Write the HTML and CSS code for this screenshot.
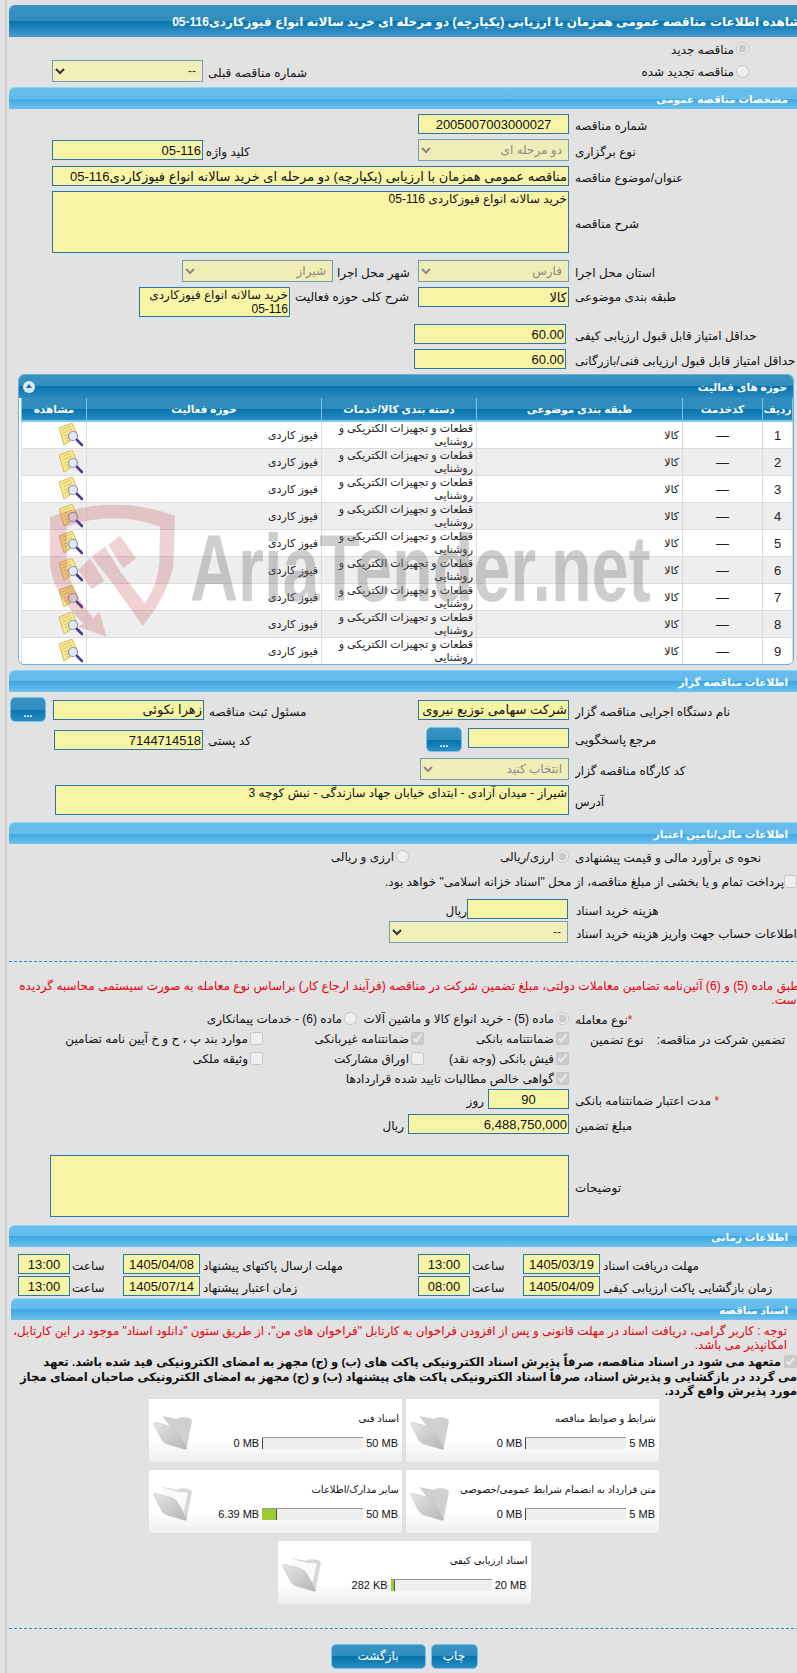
FILE: index.html
```
<!DOCTYPE html>
<html lang="fa">
<head>
<meta charset="utf-8">
<title>مشاهده اطلاعات مناقصه</title>
<link rel="stylesheet" href="styles.css">
</head>
<body>
<svg class="defs" width="0" height="0" aria-hidden="true">
  <defs>
    <linearGradient id="fg" x1="0" y1="0" x2="1" y2="1"><stop offset="0" stop-color="#e6e6e6"/><stop offset="1" stop-color="#b5b5b5"/></linearGradient>
    <symbol id="note" viewBox="0 0 24 24">
      <polygon points="0,5 13,0 19,13 5,22" fill="#f8e88e" stroke="#c9a94e" stroke-width=".8"/>
      <path d="M3 7l9-4M4 10l9-4M5 13l5-2M6 16l4-2M8 18l4-2" stroke="#d4b860" stroke-width=".8"/>
      <circle cx="14" cy="13" r="4.5" fill="#dfeaf6" stroke="#8f95b8" stroke-width="1.2"/>
      <path d="M18 17l5 5" stroke="#4a3a92" stroke-width="2.6" stroke-linecap="round"/>
    </symbol>
    <symbol id="folderFull" viewBox="0 0 42 38">
      <path d="M10 2L25 5Q33 2 40 5Q42 6 41 10L36 36L24 20Z" fill="#d0d0d0"/>
      <path d="M1 10Q1 8 4 9L19 13Q25 15 27 20L36 36Q36 38 33 37L16 32Q12 31 10 28Z" fill="url(#fg)" stroke="#c4c4c4" stroke-width=".6"/>
    </symbol>
    <symbol id="folderOpen" viewBox="0 0 42 38">
      <path d="M10 2L25 5Q33 2 40 5Q42 6 41 10L36 36L24 20Z" fill="#d8d8d8"/>
      <path d="M11 3L26 7L37 8L33 28L25 16L12 11Z" fill="#fafafa"/>
      <path d="M1 10Q1 8 4 9L19 13Q25 15 27 20L36 36Q36 38 33 37L16 32Q12 31 10 28Z" fill="url(#fg)" stroke="#c4c4c4" stroke-width=".6"/>
    </symbol>
  </defs>
</svg>
<div class="page" dir="rtl">
  <h1 class="bar dark title">مشاهده اطلاعات مناقصه عمومی همزمان با ارزیابی (یکپارچه) دو مرحله ای خرید سالانه انواع فیوزکاردی116-05</h1>

  <div class="row h23"><label class="radio r60"><input type="radio" disabled checked><span>مناقصه جدید</span></label></div>
  <div class="row h22">
    <label class="radio r60"><input type="radio" disabled><span>مناقصه تجدید شده</span></label>
    <div class="group"><span class="lab l101">شماره مناقصه قبلی</span><select class="sel w151"><option>--</option></select></div>
  </div>

  <h2 class="bar light mt5">مشخصات مناقصه عمومی</h2>
  <div class="row h20 mt5"><span class="lab main">شماره مناقصه</span><input class="inp w151 center" value="2005007003000027"></div>
  <div class="row h22 mt5">
    <span class="lab main">نوع برگزاری</span><select class="sel w151" disabled><option>دو مرحله ای</option></select>
    <div class="group"><span class="lab l43">کلید واژه</span><input class="inp w151" value="05-116"></div>
  </div>
  <div class="row h20 mt5"><span class="lab main">عنوان/موضوع مناقصه</span><input class="inp w517" value="مناقصه عمومی همزمان با ارزیابی (یکپارچه) دو مرحله ای خرید سالانه انواع فیوزکاردی116-05"></div>
  <div class="row h62 mt5"><span class="lab main">شرح مناقصه</span><textarea class="inp w517 area">خرید سالانه انواع فیوزکاردی 116-05</textarea></div>
  <div class="row h22 mt7">
    <span class="lab main">استان محل اجرا</span><select class="sel w151" disabled><option>فارس</option></select>
    <span class="lab l82">شهر محل اجرا</span><select class="sel w151" disabled><option>شیراز</option></select>
  </div>
  <div class="row h30 mt5 top">
    <span class="lab main">طبقه بندی موضوعی</span><input class="inp w151 h20" value="کالا">
    <span class="lab l123">شرح کلی حوزه فعالیت</span><textarea class="inp w151 h30">خرید سالانه انواع فیوزکاردی 116-05</textarea>
  </div>
  <div class="row h20 mt7"><span class="lab main wide">حداقل امتیاز قابل قبول ارزیابی کیفی</span><input class="inp w152" value="60.00"></div>
  <div class="row h20 mt5"><span class="lab main wide">حداقل امتیاز قابل قبول ارزیابی فنی/بازرگانی</span><input class="inp w152" value="60.00"></div>

  <section class="panel mt5">
    <div class="panel-head">
      <span class="panel-title">حوزه های فعالیت</span>
      <span class="collapse"></span>
    </div>
    <table class="grid">
      <colgroup><col class="c1"><col class="c2"><col class="c3"><col class="c4"><col class="c5"><col class="c6"></colgroup>
      <thead><tr><th>ردیف</th><th>کدخدمت</th><th>طبقه بندی موضوعی</th><th>دسته بندی کالا/خدمات</th><th>حوزه فعالیت</th><th>مشاهده</th></tr></thead>
      <tbody>
        <tr><td class="n">1</td><td class="n">—</td><td>کالا</td><td>قطعات و تجهیزات الکتریکی و روشنایی</td><td>فیوز کاردی</td><td class="ic"><svg class="note"><use href="#note"/></svg></td></tr>
        <tr><td class="n">2</td><td class="n">—</td><td>کالا</td><td>قطعات و تجهیزات الکتریکی و روشنایی</td><td>فیوز کاردی</td><td class="ic"><svg class="note"><use href="#note"/></svg></td></tr>
        <tr><td class="n">3</td><td class="n">—</td><td>کالا</td><td>قطعات و تجهیزات الکتریکی و روشنایی</td><td>فیوز کاردی</td><td class="ic"><svg class="note"><use href="#note"/></svg></td></tr>
        <tr><td class="n">4</td><td class="n">—</td><td>کالا</td><td>قطعات و تجهیزات الکتریکی و روشنایی</td><td>فیوز کاردی</td><td class="ic"><svg class="note"><use href="#note"/></svg></td></tr>
        <tr><td class="n">5</td><td class="n">—</td><td>کالا</td><td>قطعات و تجهیزات الکتریکی و روشنایی</td><td>فیوز کاردی</td><td class="ic"><svg class="note"><use href="#note"/></svg></td></tr>
        <tr><td class="n">6</td><td class="n">—</td><td>کالا</td><td>قطعات و تجهیزات الکتریکی و روشنایی</td><td>فیوز کاردی</td><td class="ic"><svg class="note"><use href="#note"/></svg></td></tr>
        <tr><td class="n">7</td><td class="n">—</td><td>کالا</td><td>قطعات و تجهیزات الکتریکی و روشنایی</td><td>فیوز کاردی</td><td class="ic"><svg class="note"><use href="#note"/></svg></td></tr>
        <tr><td class="n">8</td><td class="n">—</td><td>کالا</td><td>قطعات و تجهیزات الکتریکی و روشنایی</td><td>فیوز کاردی</td><td class="ic"><svg class="note"><use href="#note"/></svg></td></tr>
        <tr><td class="n">9</td><td class="n">—</td><td>کالا</td><td>قطعات و تجهیزات الکتریکی و روشنایی</td><td>فیوز کاردی</td><td class="ic"><svg class="note"><use href="#note"/></svg></td></tr>
      </tbody>
    </table>
  </section>

  <h2 class="bar light mt5">اطلاعات مناقصه گزار</h2>
  <div class="row h25 mt5">
    <span class="lab main">نام دستگاه اجرایی مناقصه گزار</span><input class="inp w151" value="شرکت سهامی توزیع نیروی برق استان فارس">
    <div class="group g2"><span class="lab l101">مسئول ثبت مناقصه</span><input class="inp w151" value="زهرا نکوئی"><button class="more" type="button">...</button></div>
  </div>
  <div class="row h26 mt5 top">
    <span class="lab main pt3">مرجع پاسخگویی</span><input class="inp w101 h20 mt1" value=""><button class="more ms6" type="button">...</button>
    <div class="group gpost"><span class="lab l101 pt4">کد پستی</span><input class="inp w149 h20 mt3" value="7144714518"></div>
  </div>
  <div class="row h22 mt5"><span class="lab main">کد کارگاه مناقصه گزار</span><select class="sel w149" disabled><option>انتخاب کنید</option></select></div>
  <div class="row h30 mt5"><span class="lab main">آدرس</span><textarea class="inp w514 h30">شیراز - میدان آزادی - ابتدای خیابان جهاد سازندگی - نبش کوچه 3</textarea></div>

  <h2 class="bar light mt7">اطلاعات مالی/تامین اعتبار</h2>
  <div class="row h20 mt2">
    <span class="lab main">نحوه ی برآورد مالی و قیمت پیشنهادی</span>
    <label class="radio col160"><input type="radio" disabled checked><span>ارزی/ریالی</span></label>
    <label class="radio"><input type="radio" disabled><span>ارزی و ریالی</span></label>
  </div>
  <div class="row h20 mt5 check-row">
    <label class="radio tight"><input type="checkbox" disabled><span>پرداخت تمام و یا بخشی از مبلغ مناقصه، از محل "اسناد خزانه اسلامی" خواهد بود.</span></label>
  </div>
  <div class="row h20 mt8"><span class="lab main m233">هزینه خرید اسناد</span><input class="inp w101" value=""><span class="unit">ریال</span></div>
  <div class="row h22 mt2"><span class="lab main m233">اطلاعات حساب جهت واریز هزینه خرید اسناد</span><select class="sel w179"><option>--</option></select></div>

  <hr class="dash mt18">
  <p class="red mt17"><span>طبق ماده (5) و (6) آئین‌نامه تضامین معاملات دولتی، مبلغ تضمین شرکت در مناقصه (فرآیند ارجاع کار) براساس نوع معامله به صورت سیستمی محاسبه گردیده</span><span>است.</span></p>
  <div class="row h20 mt1">
    <span class="lab main"><b class="star">*</b>نوع معامله</span>
    <label class="radio col212"><input type="radio" disabled checked><span>ماده (5) - خرید انواع کالا و ماشین آلات</span></label>
    <label class="radio"><input type="radio" disabled><span>ماده (6) - خدمات پیمانکاری</span></label>
  </div>
  <div class="row h20">
    <div class="lab main split"><span>تضمین شرکت در مناقصه:</span><span>نوع تضمین</span></div>
    <label class="radio col145"><input type="checkbox" disabled checked><span>ضمانتنامه بانکی</span></label>
    <label class="radio col161"><input type="checkbox" disabled checked><span>ضمانتنامه غیربانکی</span></label>
    <label class="radio"><input type="checkbox" disabled><span>موارد بند پ ، ح و خ آیین نامه تضامین</span></label>
  </div>
  <div class="row h20">
    <span class="lab main"></span>
    <label class="radio col145"><input type="checkbox" disabled checked><span>فیش بانکی (وجه نقد)</span></label>
    <label class="radio col161"><input type="checkbox" disabled><span>اوراق مشارکت</span></label>
    <label class="radio"><input type="checkbox" disabled><span>وثیقه ملکی</span></label>
  </div>
  <div class="row h20">
    <span class="lab main"></span>
    <label class="radio"><input type="checkbox" disabled checked><span>گواهی خالص مطالبات تایید شده قراردادها</span></label>
  </div>
  <div class="row h20 mt1"><span class="lab main"><b class="star">*</b> مدت اعتبار ضمانتنامه بانکی</span><input class="inp w81 center" value="90"><span class="unit u4">روز</span></div>
  <div class="row h20 mt5"><span class="lab main">مبلغ تضمین</span><input class="inp w161" value="6,488,750,000"><span class="unit u4">ریال</span></div>
  <div class="row h62 mt21"><span class="lab main">توضیحات</span><textarea class="inp w519 area"></textarea></div>

  <h2 class="bar light mt8">اطلاعات زمانی</h2>
  <div class="row h20 mt7">
    <span class="lab tl1">مهلت دریافت اسناد</span><input class="inp date" value="1405/03/19"><span class="lab saat">ساعت</span><input class="inp time" value="13:00">
    <span class="lab tl2">مهلت ارسال پاکتهای پیشنهاد</span><input class="inp date" value="1405/04/08"><span class="lab saat">ساعت</span><input class="inp time" value="13:00">
  </div>
  <div class="row h20 mt2">
    <span class="lab tl1">زمان بازگشایی پاکت ارزیابی کیفی</span><input class="inp date" value="1405/04/09"><span class="lab saat">ساعت</span><input class="inp time" value="08:00">
    <span class="lab tl2">زمان اعتبار پیشنهاد</span><input class="inp date" value="1405/07/14"><span class="lab saat">ساعت</span><input class="inp time" value="13:00">
  </div>

  <h2 class="bar light mt2 indent">اسناد مناقصه</h2>
  <p class="red mt4 note-red"><span>توجه : کاربر گرامی، دریافت اسناد در مهلت قانونی و پس از افزودن فراخوان به کارتابل "فراخوان های من"، از طریق ستون "دانلود اسناد" موجود در این کارتابل،</span><span>امکانپذیر می باشد.</span></p>
  <div class="pledge mt3">
    <span class="pl1"><input type="checkbox" disabled checked>متعهد می شود در اسناد مناقصه، صرفاً پذیرش اسناد الکترونیکی پاکت های (ب) و (ج) مجهز به امضای الکترونیکی قید شده باشد. تعهد</span>
    <span>می گردد در بازگشایی و پذیرش اسناد، صرفاً اسناد الکترونیکی پاکت های پیشنهاد (ب) و (ج) مجهز به امضای الکترونیکی صاحبان امضای مجاز</span>
    <span>مورد پذیرش واقع گردد.</span>
  </div>

  <div class="cards">
    <article class="card"><div class="info"><div class="cname">شرایط و ضوابط مناقصه</div><div class="prog"><span>5 MB</span><div class="track"><i></i></div><span>0 MB</span></div></div><svg class="folder"><use href="#folderFull"/></svg></article>
    <article class="card"><div class="info"><div class="cname">اسناد فنی</div><div class="prog"><span>50 MB</span><div class="track"><i></i></div><span>0 MB</span></div></div><svg class="folder"><use href="#folderFull"/></svg></article>
    <article class="card"><div class="info"><div class="cname">متن قرارداد به انضمام شرایط عمومی/خصوصی</div><div class="prog"><span>5 MB</span><div class="track"><i></i></div><span>0 MB</span></div></div><svg class="folder"><use href="#folderFull"/></svg></article>
    <article class="card"><div class="info"><div class="cname">سایر مدارک/اطلاعات</div><div class="prog"><span>50 MB</span><div class="track"><i class="fill" style="width:14px"></i></div><span>6.39 MB</span></div></div><svg class="folder"><use href="#folderOpen"/></svg></article>
    <article class="card"><div class="info"><div class="cname">اسناد ارزیابی کیفی</div><div class="prog"><span>20 MB</span><div class="track"><i class="fill" style="width:3px"></i></div><span>282 KB</span></div></div><svg class="folder"><use href="#folderOpen"/></svg></article>
  </div>

  <hr class="dash mt24">
  <div class="actions">
    <button class="btn print" type="button">چاپ</button>
    <button class="btn back" type="button">بازگشت</button>
  </div>
</div>

<div class="wm-text">AriaTender.net</div>
<svg class="wm-logo" viewBox="0 0 450 450" aria-hidden="true">
  <path d="M0 65Q190-5 375 62L370 215Q345 315 278 392L180 255L212 232L285 325Q325 265 328 200L330 95Q190 45 50 95L52 210Q60 290 130 368L148 350L170 425L85 395L100 385Q10 300 0 210Z"/>
  <path d="M175 150L210 122L258 190L220 220Z"/>
  <path d="M125 185L165 155L212 230L180 255Z"/>
  <path d="M85 225L120 190L163 258L125 283Z"/>
</svg>
</body>
</html>
```
FILE: styles.css
```
html { overflow-x: hidden; background: #e2e2e2; }
body {
  margin: 0;
  width: 797px;
  height: 1673px;
  overflow: hidden;
  position: relative;
  background: #e2e2e2;
  color: #111;
  font: 12px/20px "Liberation Sans", "DejaVu Sans", sans-serif;
}
.defs { position: absolute; }
.page {
  margin-left: 5px;
  border-left: 2px solid #cdcdcd;
  padding: 5px 0 0 2px;
  width: 800px;
  height: 1668px;
}
.bar {
  margin: 0;
  height: 22px;
  line-height: 23px;
  color: #fff;
  font-size: 10.5px;
  font-weight: bold;
  padding-right: 21px;
  border-radius: 6px 6px 0 0;
  white-space: nowrap;
  overflow: hidden;
}
.light {
  background: linear-gradient(#68bfec 0, #63bbea 50%, #3ea6e2 50%, #6cc2ee 100%);
  border-top: 1px solid #86d4f6;
  height: 21px;
}
.dark { background: linear-gradient(#3a92c1 0, #2f8ebf 50%, #0673ad 50%, #449bd0 100%); }
.title { height: 32px; line-height: 34px; font-size: 12px; padding-right: 0; }
.indent { width: 777px; }

.row { display: flex; align-items: center; white-space: nowrap; }
.top { align-items: flex-start; }
.h20 { height: 20px; }
.h22 { height: 22px; }
.h23 { height: 23px; }
.h25 { height: 25px; }
.h26 { height: 26px; }
.h30 { height: 30px; }
.h62 { height: 62px; }
.inp.h30 { height: 30px; }
.mt1 { margin-top: 1px; }
.mt2 { margin-top: 2px; }
.mt3 { margin-top: 3px; }
.mt4 { margin-top: 4px; }
.mt5 { margin-top: 5px; }
.mt7 { margin-top: 7px; }
.mt8 { margin-top: 8px; }
.mt17 { margin-top: 17px; }
.mt18 { margin-top: 18px; }
.mt21 { margin-top: 21px; }
.mt24 { margin-top: 24px; }
.inp.mt1 { margin-top: 1px; }
.inp.mt3 { margin-top: 3px; }

.lab { flex: none; text-align: left; box-sizing: border-box; padding-top: 4px; }
.top .lab { padding-top: 0; }
.top .pt3 { padding-top: 3px; }
.top .pt4 { padding-top: 4px; }
.main { width: 234px; margin-left: 6px; overflow: hidden; }
.wide { margin-left: 9px; }
.m233 { width: 233px; margin-left: 8px; }
.l43 { width: 43px; margin-left: 4px; }
.l82 { width: 82px; margin-left: 4px; margin-right: -1px; }
.l101 { width: 101px; margin-left: 5px; }
.l123 { width: 123px; margin-left: 5px; margin-right: 0; }
.group { display: flex; align-items: center; margin-right: auto; margin-left: 43px; flex: none; }
.g2 { margin-left: 1px; }
.g2 .more { margin-right: 7px; }
.gpost { margin-left: 45px; align-items: flex-start; }

.inp {
  display: block;
  box-sizing: border-box;
  flex: none;
  height: 20px;
  margin: 0;
  padding: 0 1px;
  background: #f7f5a5;
  border: 1px solid #2a76a8;
  color: #111;
  font: 13px/15px "Liberation Sans", "DejaVu Sans", sans-serif;
  resize: none;
  outline: none;
  border-radius: 0;
  overflow: hidden;
}
textarea.inp { font-size: 12px; line-height: 14px; }
.inp.area { height: 62px; }
.center { text-align: center; }
.sel {
  box-sizing: border-box;
  flex: none;
  height: 22px;
  margin: 0;
  padding: 0 2px;
  background: #f2f0b8;
  border: 1px solid #6aa0bd;
  border-radius: 0;
  color: #333;
  font: 12px "Liberation Sans", "DejaVu Sans", sans-serif;
  opacity: 1;
}
.sel:disabled { color: #8a8a8a; background: #f0eeb6; }
.w81 { width: 81px; }
.w101 { width: 101px; }
.w149 { width: 149px; }
.w151 { width: 151px; }
.w152 { width: 152px; }
.w161 { width: 161px; }
.w179 { width: 179px; }
.w514 { width: 514px; }
.w517 { width: 517px; }
.w519 { width: 519px; }
.ms6 { margin-right: 6px; }
.unit { margin-right: 0; padding-top: 3px; }
.u4 { margin-right: 4px; }

.radio { display: flex; align-items: center; gap: 2px; flex: none; }
.radio input { margin: 0; width: 13px; height: 13px; flex: none; }
.radio span { padding-top: 2px; }
.r60 { margin-right: 60px; }
.col160 { width: 160px; }
.col212 { width: 212px; }
.col145 { width: 145px; }
.col161 { width: 161px; }
.tight { gap: 0; }
.check-row { padding-right: 12px; }
.split { display: flex; justify-content: space-between; padding-left: 15px; padding-right: 24px; }
.split span { display: block; }
.star { color: #e01010; font-weight: normal; }

.panel {
  margin-right: 15px;
  margin-left: 0;
  padding-left: 3px;
  box-sizing: border-box;
  width: 776px;
  height: 291px;
  background: #fff;
  border: 1px solid #6cb0da;
  border-radius: 6px;
  overflow: hidden;
  color: #222;
}
.panel-head {
  display: flex;
  align-items: center;
  justify-content: space-between;
  height: 23px;
  margin-left: -3px;
  padding: 0 6px 0 4px;
  background: linear-gradient(#3a92c1 0, #2f8ebf 50%, #0673ad 50%, #2d8bc2 100%);
}
.panel-title { color: #fff; font-size: 10.5px; font-weight: bold; }
.collapse {
  position: relative;
  width: 12px;
  height: 12px;
  border-radius: 50%;
  background: #dfe9f6;
}
.collapse::after {
  content: "";
  position: absolute;
  left: 3px;
  top: 3px;
  border: 3px solid transparent;
  border-top: 0;
  border-bottom: 4px solid #116fa5;
}
.grid { width: 771px; border-collapse: collapse; table-layout: fixed; font-size: 11px; }
.c1 { width: 30px; }
.c2 { width: 80px; }
.c3 { width: 206px; }
.c4 { width: 155px; }
.c5 { width: 235px; }
.c6 { width: 65px; }
.grid th {
  height: 22px;
  padding: 0;
  background: linear-gradient(#2f8ebf 0, #2f8ebf 50%, #0673ad 50%, #2a8ac2 100%);
  border-left: 1px solid #7cc4ea;
  border-right: 1px solid #7cc4ea;
  border-bottom: 2px solid #7cc8ee;
  color: #fff;
  font-size: 10.5px;
  font-weight: bold;
  line-height: 20px;
  white-space: nowrap;
}
.grid td {
  height: 26px;
  padding: 0 3px;
  border: 1px solid #dcdcdc;
  border-top: 0;
  line-height: 13px;
  overflow: hidden;
}
.grid tbody tr:nth-child(even) td { background: #eee; }
.grid .n { text-align: center; font-size: 13px; }
.ic { text-align: left; }
.note { display: block; width: 24px; height: 24px; margin-left: 35px; }

.dash { margin-bottom: 0; margin-right: 0; margin-left: 0; border: 0; border-top: 1px dashed #2a8fc4; height: 0; }
.red { margin-bottom: 0; margin-right: 0; margin-left: 0; padding-left: 9px; padding-right: 9px; color: #e8000c; line-height: 14px; white-space: nowrap; font-size: 12.1px; }
.red span, .pledge span { display: block; }
.note-red { padding-right: 22px; font-size: 11.9px; }
.pledge { font-size: 11.7px; font-weight: bold; line-height: 14.5px; white-space: nowrap; padding-right: 12px; color: #111; }
.pl1 input { margin: 0 0 0 3px; vertical-align: -2px; width: 13px; height: 13px; }

.tl1 { width: 206px; margin-left: 3px; }
.tl2 { width: 215px; margin-left: 3px; }
.saat { width: 34px; margin-left: 2px; margin-right: 17px; }
.date { width: 77px; text-align: center; }
.time { width: 52px; text-align: center; }

.cards {
  display: flex;
  flex-wrap: wrap;
  justify-content: center;
  gap: 8px 4px;
  width: 510px;
  margin: 0 150px 0 0;
}
.card {
  display: flex;
  width: 253px;
  height: 63px;
  box-sizing: border-box;
  padding: 0 3px;
  background: linear-gradient(#fff 0, #fff 65%, #eee 100%);
  box-shadow: 0 0 1px #cfcfcf;
  font-size: 11px;
}
.info { flex: 1; min-width: 0; }
.cname { height: 20px; margin-top: 10px; line-height: 20px; font-size: 10px; white-space: nowrap; }
.prog { display: flex; align-items: center; gap: 3px; margin-top: 7px; padding-right: 1px; line-height: 14px; color: #111; font-size: 11px; }
.prog span { direction: ltr; unicode-bidi: isolate; }
.track { display: flex; width: 101px; height: 12px; box-sizing: border-box; background: #eee; border-top: 1px solid #999; justify-content: flex-end; }
.track i { display: block; width: 1px; height: 11px; background: #444; }
.track i.fill { background: #9ccc32; box-sizing: content-box; border-right: 1px solid #555; }
.folder { flex: none; width: 41px; height: 36px; margin-top: 15px; }

.actions { display: flex; justify-content: center; gap: 5px; width: 510px; margin: 15px 150px 0 0; }
.btn, .more {
  color: #fff;
  border: 1px solid #6cc6ee;
  background: linear-gradient(#3a92c1 0, #2f8ebf 50%, #0673ad 50%, #2d8bc2 100%);
  border-radius: 5px;
  padding: 0;
  font: 12px "Liberation Sans", "DejaVu Sans", sans-serif;
}
.btn { height: 25px; box-sizing: border-box; }
.print { width: 47px; }
.back { width: 95px; }
.more { display: block; flex: none; width: 36px; height: 25px; box-sizing: border-box; font-size: 11px; font-weight: bold; padding-top: 6px; }

.wm-text {
  position: absolute;
  left: 190px;
  top: 513px;
  color: rgba(120, 120, 120, .36);
  font: bold 95px/110px "Liberation Sans", sans-serif;
  transform: scaleX(.7);
  transform-origin: left top;
  direction: ltr;
  white-space: nowrap;
  pointer-events: none;
}
.wm-logo {
  position: absolute;
  left: 50px;
  top: 495px;
  width: 150px;
  height: 150px;
  fill: rgba(190, 50, 60, .22);
  pointer-events: none;
}
```
